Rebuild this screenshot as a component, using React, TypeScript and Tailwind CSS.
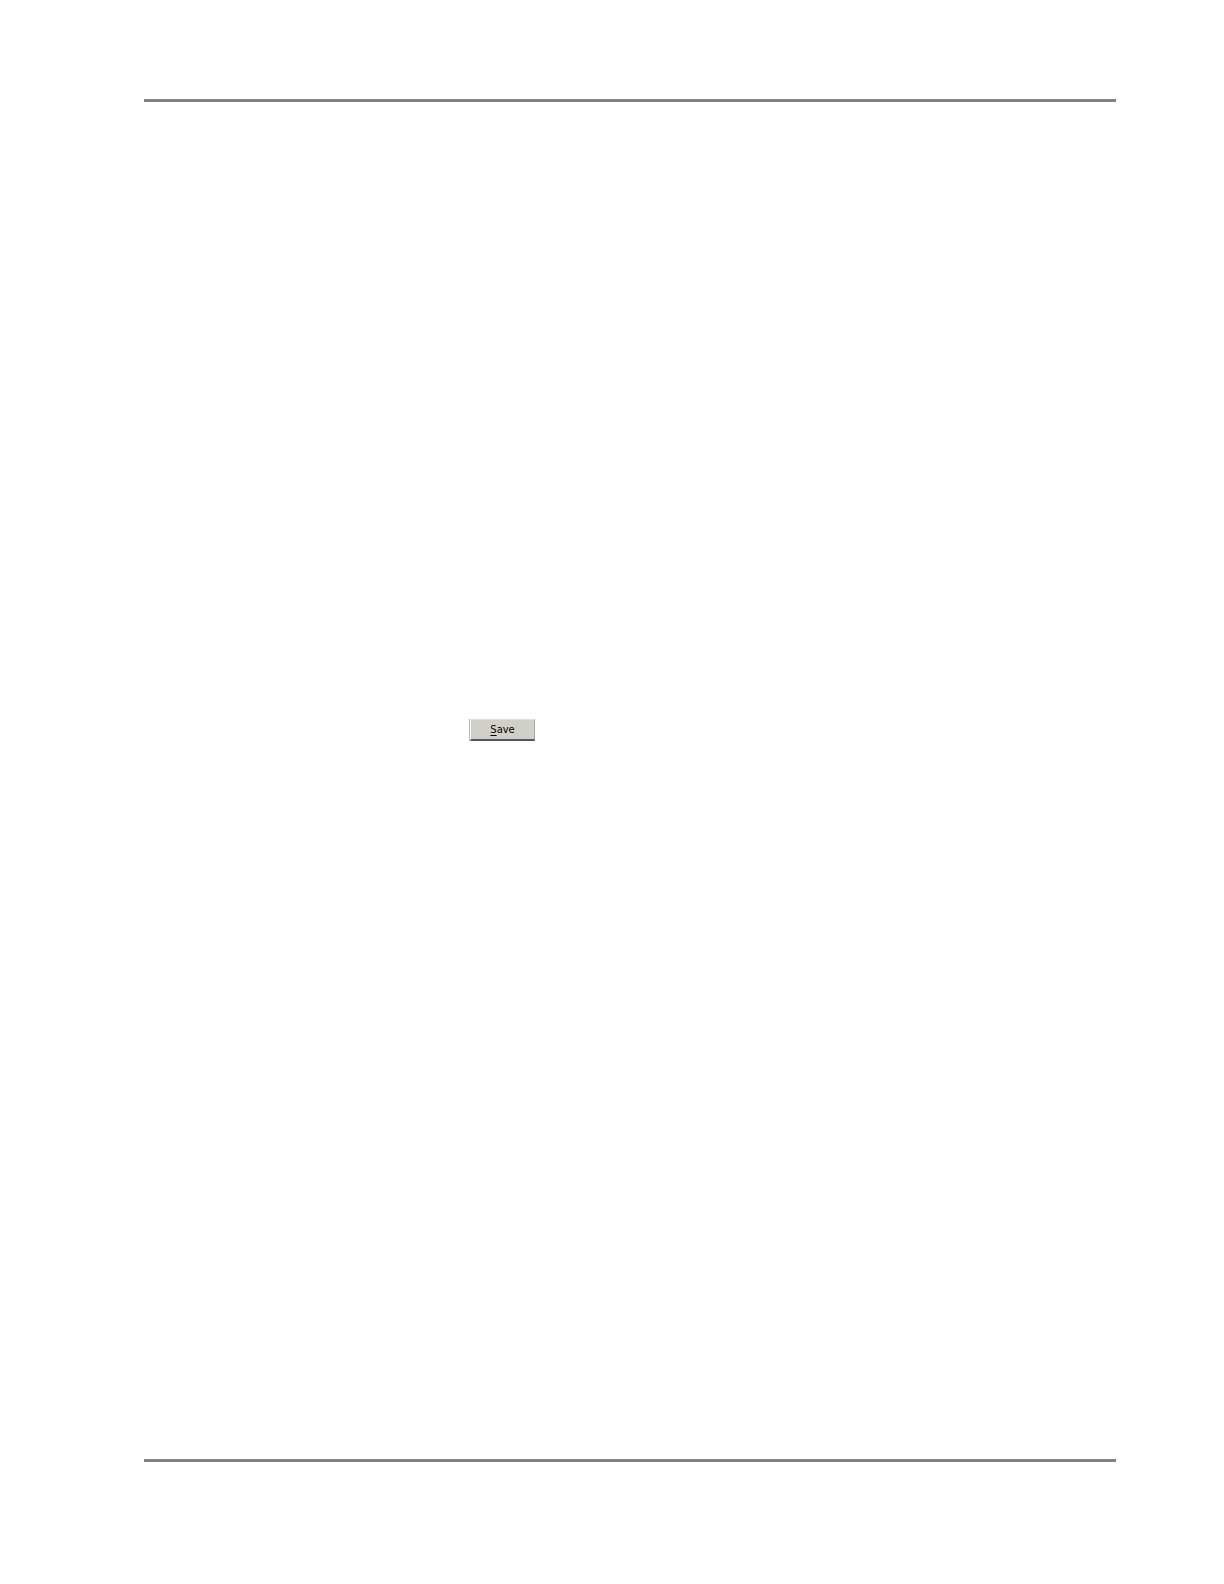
export default function App() {
  return (
    <div className="flex min-h-screen flex-col bg-white pt-[99px] pr-[108px] pb-[122px] pl-36">
      <main className="flex-1 border-y-3 border-[#828081] pt-[617px] pl-[326px]">
        <button
          type="button"
          className="flex h-[22px] w-[65px] items-center justify-center border border-t-[#dedfda] border-r-[#a5a5a5] border-b-2 border-b-[#58585c] border-l-white bg-[#d0cfc8] pt-px font-['DejaVu_Sans_Condensed','DejaVu_Sans',sans-serif] text-[11px] leading-3 text-black shadow-[-1px_0_0_#b8b8b8]"
        >
          <span>
            <span className="underline underline-offset-2">S</span>ave
          </span>
        </button>
      </main>
    </div>
  );
}
